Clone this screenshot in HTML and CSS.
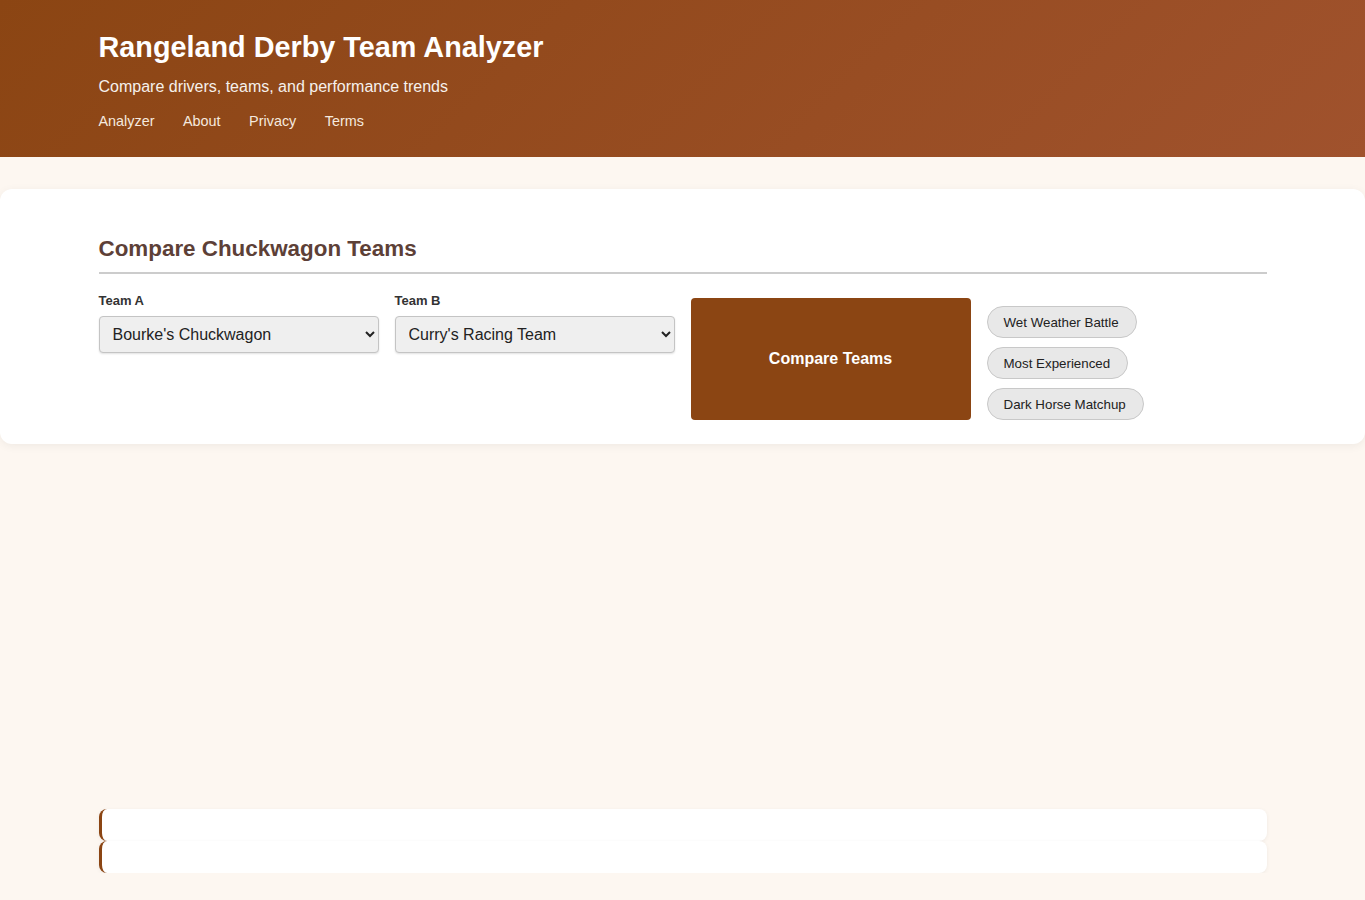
FILE: index.html
```html
<!DOCTYPE html>
<html>
<head>
    <title>Rangeland Derby Team Analyzer</title>
    <link rel="stylesheet" href="styles.css">
</head>
<body>
    <header class="site-header">
        <div class="container">
            <h1>Rangeland Derby Team Analyzer</h1>
            <p class="tagline">Compare drivers, teams, and performance trends</p>
            <nav class="site-nav">
                <a href="#">Analyzer</a>
                <a href="#">About</a>
                <a href="#">Privacy</a>
                <a href="#">Terms</a>
            </nav>
        </div>
    </header>

    <section class="card">
        <div class="container">
            <h2>Compare Chuckwagon Teams</h2>
            <div class="compare-grid">
                <div class="field">
                    <label for="teamA">Team A</label>
                    <select id="teamA">
                        <option>Bourke's Chuckwagon</option>
                        <option>Curry's Racing Team</option>
                    </select>
                </div>
                <div class="field">
                    <label for="teamB">Team B</label>
                    <select id="teamB">
                        <option>Curry's Racing Team</option>
                        <option>Bourke's Chuckwagon</option>
                    </select>
                </div>
                <button class="compare-btn">Compare Teams</button>
                <div class="presets">
                    <button class="pill">Wet Weather Battle</button>
                    <button class="pill">Most Experienced</button>
                    <button class="pill">Dark Horse Matchup</button>
                </div>
            </div>
        </div>
    </section>

    <div class="container results">
        <div class="result-bar"></div>
        <div class="result-bar"></div>
    </div>
</body>
</html>
```

FILE: styles.css
```css
*, *:before, *:after {
    box-sizing: border-box;
}
html, body {
    margin: 0;
    font-family: "Liberation Sans", Arial, sans-serif;
    background: #fdf7f1;
    color: #333;
}
.container {
    max-width: 1200px;
    margin: 0 auto;
    padding: 0 16px;
}
.site-header {
    background: linear-gradient(135deg, #8b4513 0%, #a0522d 100%);
    color: #fff;
    padding: 30px 0 27px;
}
.site-header h1 {
    margin: 0;
    font-size: 28.8px;
    line-height: 35px;
}
.tagline {
    margin: 12px 0 0;
    font-size: 16px;
    line-height: 20px;
    opacity: 0.92;
}
.site-nav {
    display: flex;
    gap: 28.5px;
    margin-top: 16px;
}
.site-nav a {
    color: #f5e9df;
    text-decoration: none;
    font-size: 14.4px;
    line-height: 17px;
}
.card {
    background: #fff;
    margin-top: 32px;
    border-radius: 12px;
    box-shadow: 0 2px 10px rgba(0, 0, 0, 0.06);
    padding: 47px 0 24px;
}
.card h2 {
    margin: 0;
    color: #5d4037;
    font-size: 22.4px;
    line-height: 26px;
    padding-bottom: 10px;
    border-bottom: 2px solid #ccc;
}
.compare-grid {
    display: grid;
    grid-template-columns: repeat(4, 1fr);
    gap: 16px;
    align-items: start;
    margin-top: 19px;
}
.field label {
    display: block;
    font-size: 13px;
    font-weight: bold;
    line-height: 15px;
    margin-bottom: 8px;
}
.field select {
    width: 100%;
    height: 37px;
    font-family: inherit;
    font-size: 16px;
    color: #222;
    padding: 0 9px;
    background: #efefef;
    border: 1px solid #c4c4c4;
    border-radius: 4px;
    box-shadow: 0 1px 2px rgba(0, 0, 0, 0.12);
}
.compare-btn {
    margin-top: 5px;
    height: 122px;
    background: #8b4513;
    color: #fff;
    border: none;
    border-radius: 4px;
    font-family: inherit;
    font-size: 16px;
    font-weight: bold;
}
.presets {
    display: flex;
    flex-direction: column;
    align-items: flex-start;
    gap: 9px;
    padding-top: 13px;
}
.pill {
    height: 32px;
    padding: 0 17px 0 16px;
    background: #e8e8e8;
    border: 1px solid #c8c8c8;
    border-radius: 16px;
    font-family: inherit;
    font-size: 13.33px;
    color: #222;
}
.results {
    margin-top: 365px;
}
.result-bar {
    height: 32px;
    background: #fff;
    border-left: 3px solid #8b4513;
    border-radius: 8px;
    box-shadow: 0 1px 4px rgba(0, 0, 0, 0.06);
}
```
